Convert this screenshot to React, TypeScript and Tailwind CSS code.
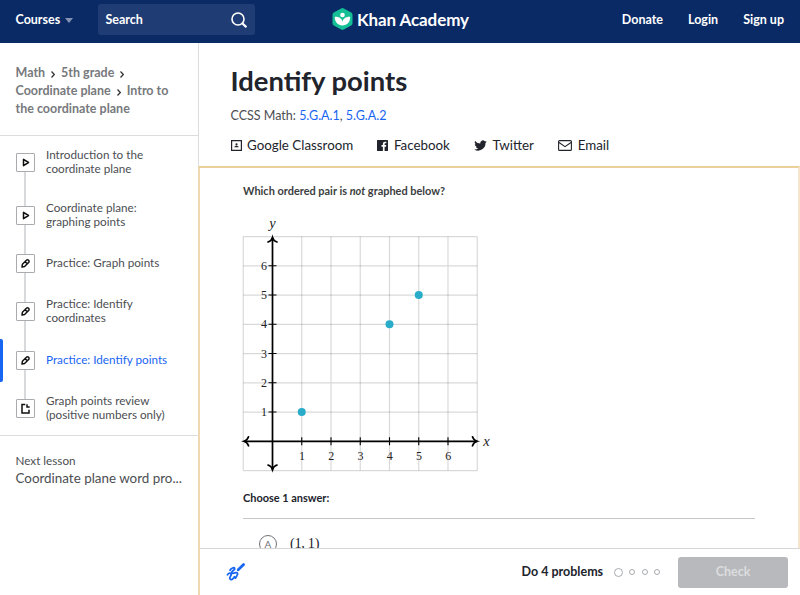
import { PropsWithChildren } from "react";

type LessonType = "video" | "exercise" | "article";

type Lesson = {
    type: LessonType;
    lines: string[];
    active?: boolean;
}

const LESSONS: Lesson[] = [
    { type: "video", lines: ["Introduction to the", "coordinate plane"] },
    { type: "video", lines: ["Coordinate plane:", "graphing points"] },
    { type: "exercise", lines: ["Practice: Graph points"] },
    { type: "exercise", lines: ["Practice: Identify", "coordinates"] },
    { type: "exercise", lines: ["Practice: Identify points"], active: true },
    { type: "article", lines: ["Graph points review", "(positive numbers only)"] },
];

const POINTS = [[1, 1], [4, 4], [5, 5]];

// graph geometry, one unit is 29.25px
const UNIT = 29.25;
const gx = (x: number) => 31.5 + x * UNIT;
const gy = (y: number) => 227.3 - y * UNIT;

const Logo = () => (
    <svg className="w-[21px] h-[22px]" viewBox="0 0 21 22">
        <path d="M9.2.4a2.6 2.6 0 0 1 2.6 0l7.4 4.2a2.6 2.6 0 0 1 1.3 2.2v8.4a2.6 2.6 0 0 1-1.3 2.2l-7.4 4.2a2.6 2.6 0 0 1-2.6 0l-7.4-4.2A2.6 2.6 0 0 1 .5 15.200V6.800a2.600 2.600 0 0 1 1.300-2.200z" fill="#14bf96" />
        <circle cx="10.500" cy="7" r="2.300" fill="#fff" />
        <path d="M2.800 8.800c4.600-.2 7.200 2 7.700 5 .5-3 3.100-5.200 7.700-5 .2 5-3 8.600-7.700 8.600s-7.900-3.600-7.700-8.600z" fill="#fff" />
    </svg>
)

const Header = () => (
    <header className="h-[43px] shrink-0 bg-[#0a2a66] text-white font-bold text-[12.5px] flex items-center justify-between pl-[15.5px] pr-4">
        <div className="flex items-center w-[316.5px] pb-1">
            <span className="w-[45px] pt-px">Courses</span>
            <svg className="w-2 h-[5px] ml-1 mt-[2px]" viewBox="0 0 8 5"><path d="M0 0h8L4 5z" fill="#8492b4" /></svg>
            <div className="ml-[25px] w-[157px] h-[31px] rounded-[3px] bg-[#203c74] flex items-center justify-between pl-2 pr-2">
                <span className="pt-px">Search</span>
                <svg className="size-4" viewBox="0 0 16 16" fill="none" stroke="#fff">
                    <circle cx="7" cy="7" r="6" strokeWidth="1.600" />
                    <path d="M11.500 11.500L14.800 14.600" strokeWidth="2.200" strokeLinecap="round" />
                </svg>
            </div>
        </div>
        <div className="flex-1 flex items-center gap-1 pb-[5px]">
            <Logo />
            <span className="text-[17px] tracking-[-0.1px] pt-px">Khan Academy</span>
        </div>
        <nav className="flex gap-[25px] pb-[3px]">
            <span>Donate</span>
            <span>Login</span>
            <span>Sign up</span>
        </nav>
    </header>
)

const Chevron = () => (
    <svg className="inline w-1 h-[7px] mx-[6px] -mb-[2px]" viewBox="0 0 4 7" fill="none" stroke="#333" strokeWidth="1.200"><path d="M.5.5L3.300 3.500.5 6.500" /></svg>
)

const LessonIcon = ({ type }: { type: LessonType }) => (
    <div className="relative size-[19px] shrink-0 rounded-[1px] border border-[#a9abae] bg-white flex items-center justify-center">
        <svg className="size-[13px]" viewBox="0 0 13 13" fill="none" stroke="#111" strokeWidth="1.500" strokeLinejoin="round">
            {type === "video" && <path d="M4.500 3.300v6.400l5-3.200z" />}
            {type === "exercise" && <path d="M3 10l.4-2.700 4-4a1.500 1.500 0 0 1 2.200 2.200l-4 4zM6.200 4.700L8.300 6.800" />}
            {type === "article" && <path d="M6.300 2.500H3v8.500h7V7.700M8 2.300v2.600h2.700" strokeLinejoin="miter" />}
        </svg>
    </div>
)

const LessonRow = ({ lesson, first, last }: { lesson: Lesson, first: boolean, last: boolean }) => (
    <li className={`relative flex items-center pl-[15.5px] ${lesson.lines.length > 1 ? "h-[53.4px]" : "h-[43px]"}`}>
        {lesson.active && <span className="absolute left-0 inset-y-0 w-[3px] rounded-r-[2px] bg-[#1865f2]" />}
        <span className={`absolute left-6 w-[2px] bg-[#d9dadc] ${first ? "top-1/2" : "top-0"} ${last ? "bottom-1/2" : "bottom-0"}`} />
        <LessonIcon type={lesson.type} />
        <p className={`ml-[11.5px] pb-[3px] text-[11.7px] leading-[14px] ${lesson.active ? "text-[#1865f2]" : "text-[#4c4e52]"}`}>
            {lesson.lines.map(line => <span key={line} className="block">{line}</span>)}
        </p>
    </li>
)

const Sidebar = () => (
    <aside className="w-[198px] shrink-0">
        <div className="h-[92.5px] border-b border-[#dcdddf] pl-[15.5px] pt-[21px] text-[12.5px] leading-[18px] font-bold text-[#77797d] whitespace-nowrap">
            <div>Math<Chevron />5th grade<Chevron /></div>
            <div>Coordinate plane<Chevron />Intro to</div>
            <div>the coordinate plane</div>
        </div>
        <ul className="border-b border-[#dcdddf]">
            {LESSONS.map((lesson, i) => (
                <LessonRow key={i} lesson={lesson} first={i === 0} last={i === LESSONS.length - 1} />
            ))}
        </ul>
        <div className="pl-[15.5px] pt-[16px] text-[#4c4e52] whitespace-nowrap">
            <p className="text-[11.7px] leading-4">Next lesson</p>
            <p className="pt-px text-[13.4px] leading-[18px]">Coordinate plane word pro...</p>
        </div>
    </aside>
)

const Share = ({ label, children }: PropsWithChildren<{ label: string }>) => (
    <a className="flex items-center">
        {children}
        <span className="ml-[5.5px]">{label}</span>
    </a>
)

const TitleBlock = () => (
    <section className="h-[123px] shrink-0 border-l border-[#dcdddf] pl-[31.5px] text-[#21242c]">
        <h1 className="pt-[20px] text-[27.4px] leading-[36px] font-bold">Identify points</h1>
        <p className="mt-[9px] text-[12.5px] leading-4 text-[#4c4e52]">
            CCSS Math: <span className="text-[#1865f2]">5.G.A.1</span>, <span className="text-[#1865f2]">5.G.A.2</span>
        </p>
        <div className="mt-[12px] flex gap-[24.2px] text-[13.35px] leading-[18px]">
            <Share label="Google Classroom">
                <svg className="w-[11px] h-[11px]" viewBox="0 0 11 11">
                    <path d="M.6.6h9.800v9.800H.6z" fill="none" stroke="#21242c" strokeWidth="1.200" />
                    <circle cx="5.500" cy="4.300" r="1.100" fill="#21242c" />
                    <path d="M3.300 7.300c0-2 4.400-2 4.400 0z" fill="#21242c" />
                </svg>
            </Share>
            <Share label="Facebook">
                <svg className="w-[11px] h-[11px]" viewBox="0 0 11 11">
                    <path d="M.6 0h9.800a.6.6 0 0 1 .6.6v9.800a.6.6 0 0 1-.6.6H7.600V6.800H9l.2-1.700H7.600V4.100c0-.5.200-.8.900-.8h.8V1.800C8.900 1.700 8.500 1.700 8 1.700c-1.300 0-2.100.8-2.100 2.200v1.200H4.500v1.700h1.400V11H.6a.6.6 0 0 1-.6-.6V.6A.6.6 0 0 1 .6 0z" fill="#21242c" />
                </svg>
            </Share>
            <Share label="Twitter">
                <svg className="w-[13px] h-[11px]" viewBox="0 1.500 24 21">
                    <path d="M24 4.600a10 10 0 0 1-2.800.8 4.900 4.900 0 0 0 2.100-2.700 10 10 0 0 1-3.100 1.200 4.900 4.900 0 0 0-8.400 4.500A14 14 0 0 1 1.700 3.200a4.900 4.900 0 0 0 1.500 6.500 4.900 4.900 0 0 1-2.200-.6 4.900 4.900 0 0 0 3.900 4.900 5 5 0 0 1-2.200.1 4.900 4.900 0 0 0 4.600 3.400A9.900 9.900 0 0 1 0 19.500a14 14 0 0 0 21.500-12.400A10 10 0 0 0 24 4.600z" fill="#21242c" />
                </svg>
            </Share>
            <Share label="Email">
                <svg className="w-[14px] h-[11px]" viewBox="0 0 14 11" fill="none" stroke="#21242c" strokeWidth="1.100">
                    <rect x=".6" y=".6" width="12.800" height="9.800" rx="1" />
                    <path d="M1 2.500l6 4.200 6-4.200" />
                </svg>
            </Share>
        </div>
    </section>
)

const Graph = () => {
    const ticks = [1, 2, 3, 4, 5, 6];
    return (
        <svg className="block w-[260px] h-[262px] mt-[15px] -ml-[2px] font-['Liberation_Serif',serif]" viewBox="0 0 260 262" fill="none">
            <g stroke="#000" strokeOpacity=".15" strokeWidth="1.200">
                {[-1, 0, ...ticks, 7].map(n => (
                    <path key={n} d={`M${gx(n)} ${gy(7)}V${gy(-1)}M${gx(-1)} ${gy(n)}H${gx(7)}`} />
                ))}
            </g>
            <g stroke="#000" strokeWidth="1.700">
                <path d={`M${gx(0)} ${gy(7) + 1}V${gy(-1)}M${gx(-1) + 1} ${gy(0)}H${gx(7)}`} />
                <path strokeLinecap="round" d="M27 28c2.500-.8 3.900-2.300 4.500-4.500.6 2.200 2 3.700 4.500 4.500M27 251c2.500.8 3.900 2.300 4.500 4.500.6-2.200 2-3.700 4.500-4.500M7.500 222.800c-.8 2.500-2.300 3.900-4.500 4.500 2.200.6 3.700 2 4.500 4.500M231.500 222.800c.8 2.500 2.300 3.900 4.500 4.500-2.200.6-3.700 2-4.500 4.500" />
            </g>
            {ticks.map(n => (
                <path key={n} stroke="#000" strokeWidth="1.100" d={`M${gx(n)} ${gy(0) - 4}v8M${gx(0) - 4} ${gy(n)}h8`} />
            ))}
            <g fill="#222" fontSize="12" textAnchor="middle">
                {ticks.map(n => <text key={n} x={gx(n) + .3} y="245.500">{n}</text>)}
                {ticks.map(n => <text key={n} x="23" y={gy(n) + 4}>{n}</text>)}
                <text x="31.500" y="13.500" fontSize="14.500" fontStyle="italic">y</text>
                <text x="245.500" y="231.500" fontSize="14.500" fontStyle="italic">x</text>
            </g>
            {POINTS.map(([x, y]) => <circle key={x} cx={gx(x)} cy={gy(y)} r="4" fill="#29abca" />)}
        </svg>
    )
}

const Exercise = () => (
    <section className="flex-1 min-h-0 overflow-hidden border-2 border-b-0 border-t-[#ecd09a] border-l-[#f0d9b0] border-r-[#f5e6cb] pl-[43px] pr-[43px] text-[#21242c]">
        <p className="pt-[15px] text-[10.95px] leading-4 font-bold text-[#3b3e40]">Which ordered pair is <em>not</em> graphed below?</p>
        <Graph />
        <p className="mt-[14px] text-[10.95px] leading-4 font-bold">Choose 1 answer:</p>
        <div className="mt-3 border-t border-[#c5c6c8] pt-4 pl-4 flex items-start">
            <span className="size-[18px] shrink-0 rounded-full border border-[#717378] flex items-center justify-center text-[10px] text-[#717378]">A</span>
            <span className="ml-[13px] text-[14.3px] tracking-[-0.3px] leading-[17px] font-['Liberation_Serif',serif]">(1, 1)</span>
        </div>
    </section>
)

const Footer = () => (
    <footer className="h-[47px] shrink-0 border-l-2 border-[#f0d9b0] flex">
        <div className="flex-1 border-t border-[#d5d6d8] flex items-center pl-[26px] pr-3 text-[12.5px] font-bold">
            <svg className="w-5 h-5" viewBox="0 0 20 20" fill="none" stroke="#1865f2" strokeLinecap="round" strokeLinejoin="round">
                <path d="M1.500 12.700C3 10.800 5 10.800 5.200 12.200c.2 1.600-2.200 3.100-1.200 4.700 1.300 1.700 3.500-.2 4.500-2.200M4 8.300C5.300 6 8 5 8.700 6.500 9.300 8.100 4.700 9.300 6 11c1.200 1.400 4.300-1.500 5.400 0 1.100 1.800-1.300 3.200-1.900 5.200" strokeWidth="1.800" />
                <path d="M12.200 7.700L17.600 2.600" strokeWidth="2.800" />
            </svg>
            <span className="ml-auto text-[#21242c]">Do 4 problems</span>
            <div className="ml-[11px] mr-[18px] flex items-center gap-[6.3px]">
                <span className="size-[9px] rounded-full border border-[#a9abaf]" />
                <span className="size-[6px] rounded-full border border-[#a9abaf]" />
                <span className="size-[6px] rounded-full border border-[#a9abaf]" />
                <span className="size-[6px] rounded-full border border-[#a9abaf]" />
            </div>
            <button className="w-[110px] h-[31px] rounded-[3px] bg-[#b8b9bc] text-[#dcdddf]">Check</button>
        </div>
    </footer>
)

const App = () => (
    <div className="w-[800px] h-[595px] overflow-hidden flex flex-col bg-white font-['Lato',sans-serif]">
        <Header />
        <div className="flex-1 min-h-0 flex">
            <Sidebar />
            <main className="flex-1 min-w-0 flex flex-col">
                <TitleBlock />
                <Exercise />
                <Footer />
            </main>
        </div>
    </div>
)

export default App;
